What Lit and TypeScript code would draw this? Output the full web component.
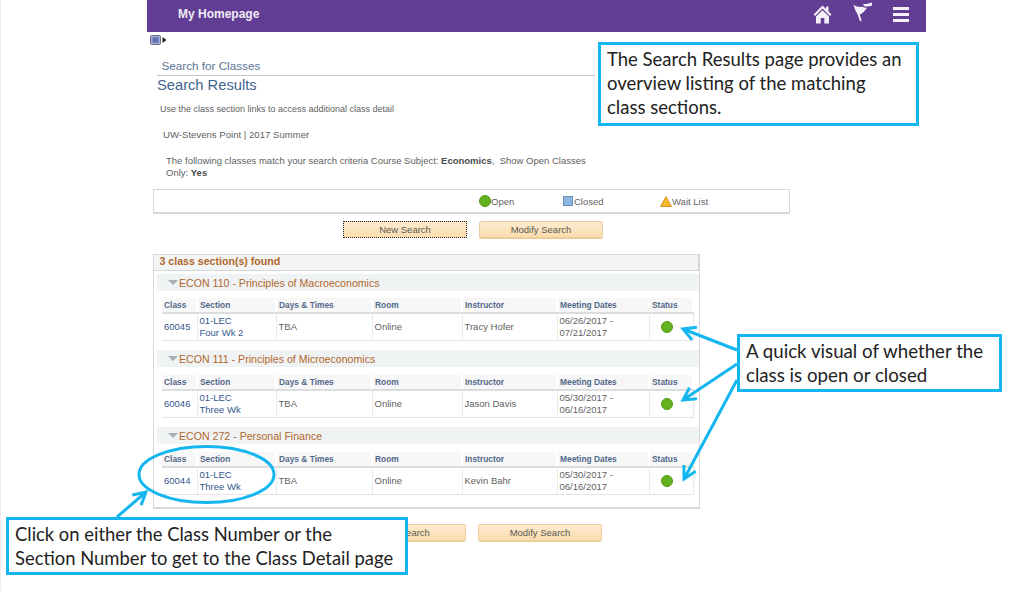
import { LitElement, html, css, svg } from "lit";
import { customElement } from "lit/decorators.js";

const groups = [
  { title: "ECON 110 - Principles of Macroeconomics", cls: "60045", sec: ["01-LEC", "Four Wk 2"], who: "Tracy Hofer", dates: ["06/26/2017 -", "07/21/2017"], gap: "g1" },
  { title: "ECON 111 - Principles of Microeconomics", cls: "60046", sec: ["01-LEC", "Three Wk"], who: "Jason Davis", dates: ["05/30/2017 -", "06/16/2017"], gap: "g2" },
  { title: "ECON 272 - Personal Finance", cls: "60044", sec: ["01-LEC", "Three Wk"], who: "Kevin Bahr", dates: ["05/30/2017 -", "06/16/2017"], gap: "g3" },
];

@customElement("app-root")
export class AppRoot extends LitElement {
  static styles = css`
    :host {
      display: block;
      position: relative;
      width: 1024px;
      height: 591px;
      overflow: hidden;
      background: #fff;
      box-shadow: inset 1px 0 #efefef;
      font-family: "Liberation Sans", Arial, sans-serif;
      font-size: 9.5px;
      color: #5f5f5f;
    }
    .page {
      width: 779px;
      margin-left: 147px;
    }
    .topbar {
      height: 32px;
      background: #613d94;
      display: flex;
      align-items: center;
      padding-left: 31px;
      color: #f1ecf6;
      font-weight: bold;
      font-size: 12px;
      box-sizing: border-box;
    }
    .topbar .name {
      flex: 1;
      margin-top: -4px;
    }
    .topbar svg {
      display: block;
      margin-top: -4px;
    }
    .topbar svg.flag { margin-top: -8px; }
    .home { margin-right: 21px; }
    .flag { margin-right: 20px; }
    .menu { margin-right: 17px; }
    .pagelet {
      display: flex;
      align-items: center;
      gap: 1px;
      height: 14px;
      margin: 1px 0 0 3px;
    }
    .crumb {
      margin: 12px 0 0 10px;
      width: 433px;
      padding: 0 0 2px 4.5px;
      border-bottom: 1px solid #c4c7cc;
      font-size: 11.7px;
      line-height: 14px;
      color: #5b7596;
    }
    .title {
      margin: 0 0 0 10px;
      font-size: 14.7px;
      line-height: 18px;
      color: #3f658f;
    }
    .note {
      line-height: 11.6px;
      color: #5f5f5f;
    }
    .use { margin: 10px 0 0 13px; font-size: 9px; }
    .term { margin: 13px 0 0 16px; font-size: 9.6px; }
    .match { margin: 15px 0 0 19px; width: 430px; }
    .match b { color: #4c4c4c; }
    .legend {
      margin: 11px 0 0 6px;
      width: 637px;
      height: 25px;
      box-sizing: border-box;
      border: 1px solid #d6d8de;
      border-bottom-width: 2px;
      display: flex;
      align-items: center;
      padding: 0 0 0 325px;
    }
    .legend span {
      display: flex;
      align-items: center;
    }
    .legend .open { width: 84px; }
    .legend .closed { width: 97px; }
    .dot {
      display: block;
      border-radius: 50%;
      background: #63b31c;
      border: 1px solid #4f9a17;
      box-sizing: border-box;
    }
    .legend .dot {
      width: 12px;
      height: 12px;
    }
    .square {
      width: 10px;
      height: 10px;
      box-sizing: border-box;
      background: #8db4e2;
      border: 1px solid #6c8fb8;
      margin-right: 1px;
    }
    .buttons {
      display: flex;
      gap: 12px;
      margin: 7px 0 0 196px;
    }
    .buttons.low { margin: 15px 0 0 195px; }
    .btn {
      width: 124px;
      height: 17px;
      box-sizing: border-box;
      border: 1px solid #eccfa0;
      border-radius: 2px;
      background: linear-gradient(#fdebd0, #fbdcae);
      box-shadow: 0 1px 0 #f0c993;
      text-align: center;
      line-height: 15px;
      color: #5a5a52;
    }
    .btn.focus {
      border: 1px dotted #222;
      border-radius: 0;
      box-shadow: none;
    }
    .results {
      margin: 16px 0 0 6px;
      width: 547px;
      height: 255px;
      box-sizing: border-box;
      border: 1px solid #d7d9dd;
      border-bottom-width: 2px;
    }
    .found {
      height: 16px;
      box-sizing: border-box;
      padding-left: 5.5px;
      background: #f3f5f5;
      border-bottom: 1px solid #d3d6da;
      border-right: 1px solid #d3d6da;
      color: #b0672c;
      font-weight: bold;
      font-size: 10.6px;
      line-height: 13px;
    }
    .group {
      margin-left: 3px;
      height: 17px;
      background: #f0f3f3;
      display: flex;
      align-items: center;
      gap: 1px;
      padding-left: 11px;
      color: #b0672c;
      font-size: 10.6px;
    }
    .group i {
      width: 0;
      height: 0;
      border-style: solid;
      border-width: 5px 5.5px 0;
      border-color: #a9aeb2 transparent transparent;
    }
    .g1 { margin-top: 3px; }
    .g2 { margin-top: 9px; }
    .g3 { margin-top: 9px; }
    table {
      border-collapse: collapse;
      table-layout: fixed;
      width: 531px;
      margin: 8px 0 0 8px;
    }
    .g1 + table { margin-top: 7px; }
    th {
      height: 14px;
      padding: 0 0 0 2px;
      background: #f7f7f7;
      border-right: 2px solid #fff;
      border-bottom: 2px solid #dcdddf;
      text-align: left;
      font-size: 8.4px;
      color: #51698a;
      font-weight: bold;
    }
    td {
      height: 26px;
      padding: 0 0 0 2px;
      border-right: 1px solid #eaeaea;
      border-bottom: 1px solid #e4e4e4;
      line-height: 12px;
      white-space: nowrap;
    }
    td.link { color: #33578c; }
    td .dot {
      width: 12px;
      height: 12px;
      margin: 0 auto;
      position: relative;
      left: -5px;
    }
    .callout {
      position: absolute;
      box-sizing: border-box;
      background: #fff;
      border: 3px solid #14b6ef;
      font-family: Lato, "Open Sans", sans-serif;
      font-size: 18.5px;
      line-height: 24px;
      color: #222;
      padding: 2px 0 0 6px;
      white-space: nowrap;
    }
    .c1 { left: 598px; top: 42px; width: 321px; height: 84px; }
    .c2 { left: 737px; top: 334px; width: 265px; height: 58px; font-size: 18.7px; }
    .c3 { left: 6px; top: 517px; width: 402px; height: 58px; font-size: 18.4px; }
    .marks {
      position: absolute;
      left: 0;
      top: 0;
      pointer-events: none;
    }
    .marks path, .marks ellipse {
      fill: none;
      stroke: #14b6ef;
      stroke-width: 3;
    }
  `;

  arrow(x1: number, y1: number, x2: number, y2: number) {
    // line with an open head at x2,y2
    const a = Math.atan2(y1 - y2, x1 - x2);
    const h = 14;
    const p = (d: number) => `${x2 + h * Math.cos(a + d)} ${y2 + h * Math.sin(a + d)}`;
    return svg`<path d="M${x1} ${y1}L${x2} ${y2}M${p(0.5)}L${x2} ${y2}L${p(-0.5)}"></path>`;
  }

  renderGroup(g: (typeof groups)[number]) {
    return html`
      <div class="group ${g.gap}"><i></i>${g.title}</div>
      <table>
        <colgroup>
          <col style="width:35px" /><col style="width:79px" /><col style="width:96px" />
          <col style="width:90px" /><col style="width:95px" /><col style="width:92px" /><col style="width:44px" />
        </colgroup>
        <tr>
          <th>Class</th><th>Section</th><th>Days &amp; Times</th><th>Room</th>
          <th>Instructor</th><th>Meeting Dates</th><th>Status</th>
        </tr>
        <tr>
          <td class="link">${g.cls}</td>
          <td class="link">${g.sec[0]}<br />${g.sec[1]}</td>
          <td>TBA</td>
          <td>Online</td>
          <td>${g.who}</td>
          <td>${g.dates[0]}<br />${g.dates[1]}</td>
          <td><span class="dot"></span></td>
        </tr>
      </table>
    `;
  }

  render() {
    return html`
      <div class="page">
        <div class="topbar">
          <span class="name">My Homepage</span>
          <svg class="home" width="19" height="19" viewBox="0 0 19 19" fill="#f4f1f8">
            <path d="M9.5 0.5L0.5 9.5L2 11L9.5 3.6L17 11L18.5 9.5L15.5 6.5V1.5H13V4L9.5 0.5Z"></path>
            <path d="M9.5 5.2L3 11.6V18.5H7.7V13H11.3V18.5H16V11.6Z"></path>
          </svg>
          <svg class="flag" width="20" height="20" viewBox="0 0 20 20" fill="#f4f1f8">
            <path d="M0.5 2.5C3 5 7 5 9.5 4.8C11 5.8 12.5 6 14 5.7C12.5 8.5 9.5 11.5 6.8 12.5L8.6 18.8L7 19.2L4.6 12.2C2.8 9.5 1.2 6 0.5 2.5Z"></path>
            <path d="M10 1.8C13 2.4 16 1.5 19 0.4V3.4C16 4.6 13 5 11 4Z"></path>
          </svg>
          <svg class="menu" width="16" height="15" viewBox="0 0 16 15" fill="#f4f1f8">
            <rect width="16" height="3"></rect><rect y="6" width="16" height="3"></rect><rect y="12" width="16" height="3"></rect>
          </svg>
        </div>
        <div class="pagelet">
          <svg width="11" height="10" viewBox="0 0 11 10">
            <rect x="0.5" y="0.5" width="10" height="9" rx="1" fill="#9fa9cf" stroke="#6d7386"></rect>
            <rect x="2.5" y="2.5" width="6" height="5" fill="#5d72b5"></rect>
          </svg>
          <svg width="5" height="6" viewBox="0 0 5 6"><path d="M0.5 0L4.5 3L0.5 6Z" fill="#222"></path></svg>
        </div>
        <div class="crumb">Search for Classes</div>
        <div class="title">Search Results</div>
        <div class="note use">Use the class section links to access additional class detail</div>
        <div class="note term">UW-Stevens Point | 2017 Summer</div>
        <div class="note match">
          The following classes match your search criteria Course Subject: <b>Economics</b>,&nbsp; Show Open Classes Only: <b>Yes</b>
        </div>
        <div class="legend">
          <span class="open"><span class="dot"></span>Open</span>
          <span class="closed"><span class="square"></span>Closed</span>
          <span>
            <svg width="12" height="11" viewBox="0 0 12 11"><path d="M6 0.7L11.4 10.5H0.6Z" fill="#f7b92f" stroke="#d98f1c"></path></svg>Wait List
          </span>
        </div>
        <div class="buttons">
          <div class="btn focus">New Search</div>
          <div class="btn">Modify Search</div>
        </div>
        <div class="results">
          <div class="found">3 class section(s) found</div>
          ${groups.map((g) => this.renderGroup(g))}
        </div>
        <div class="buttons low">
          <div class="btn">New Search</div>
          <div class="btn">Modify Search</div>
        </div>
      </div>
      <svg class="marks" width="1024" height="591" viewBox="0 0 1024 591">
        <ellipse cx="206.5" cy="474.5" rx="67.5" ry="28"></ellipse>
        ${this.arrow(737, 350, 683, 329)}
        ${this.arrow(737, 364, 683, 400)}
        ${this.arrow(737, 380, 684, 479)}
        ${this.arrow(117, 517, 146, 492)}
      </svg>
      <div class="callout c1">The Search Results page provides an<br />overview listing of the matching<br />class sections.</div>
      <div class="callout c2">A quick visual of whether the<br />class is open or closed</div>
      <div class="callout c3">Click on either the Class Number or the<br />Section Number to get to the Class Detail page</div>
    `;
  }
}
